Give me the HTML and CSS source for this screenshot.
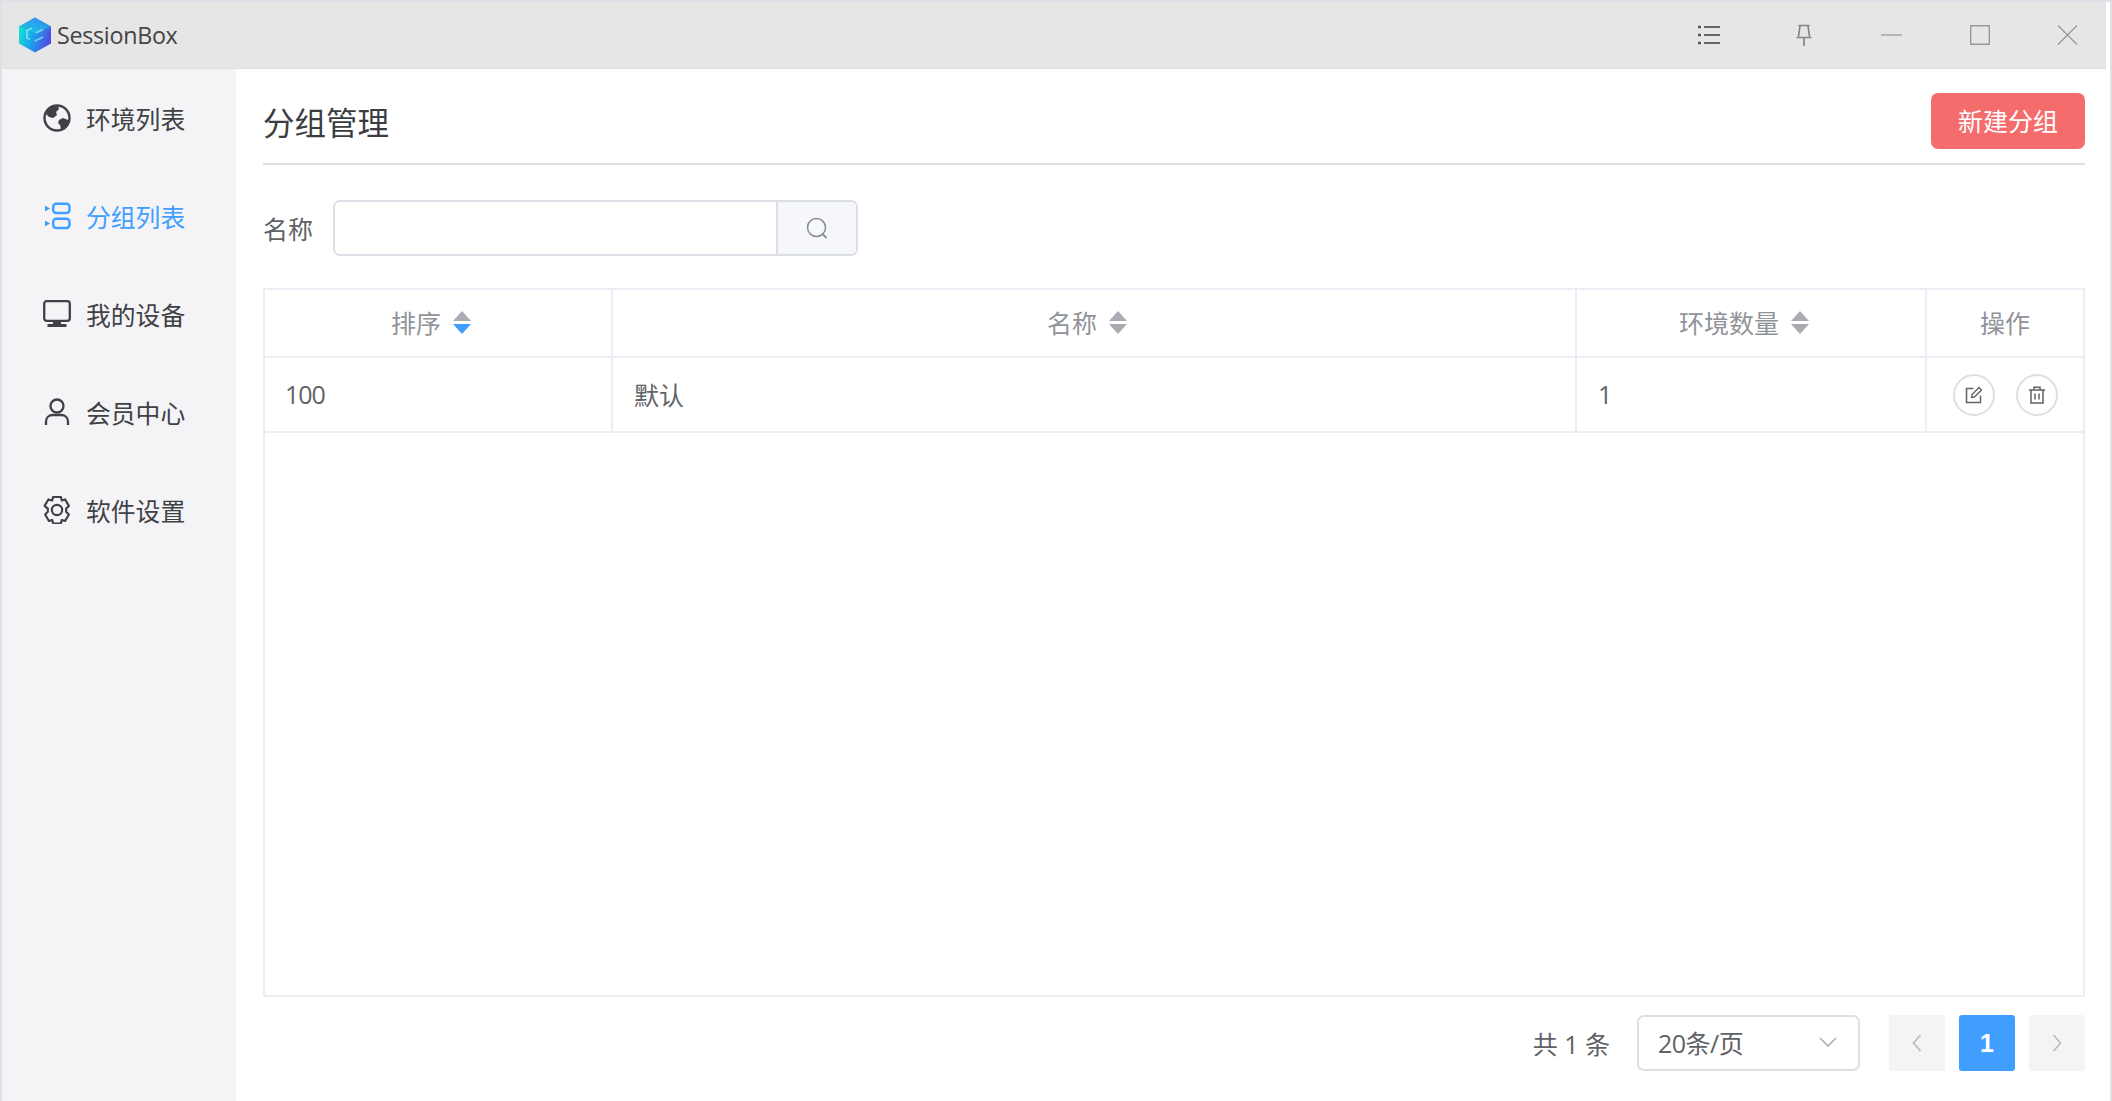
FILE: index.html
```html
<!DOCTYPE html>
<html lang="zh">
<head>
<meta charset="utf-8">
<title>SessionBox</title>
<link rel="stylesheet" href="styles.css">
</head>
<body>
<div class="app">
  <header class="titlebar">
    <div class="brand">
      <svg class="logo" viewBox="0 0 34 36">
        <defs>
          <linearGradient id="lg" x1="0" y1="0.3" x2="1" y2="0.7">
            <stop offset="0" stop-color="#12e6d2"/><stop offset="0.45" stop-color="#1aa6ee"/><stop offset="1" stop-color="#5242de"/>
          </linearGradient>
          <linearGradient id="lg2" x1="0" y1="0" x2="0" y2="1">
            <stop offset="0" stop-color="#3a86f5"/><stop offset="1" stop-color="#18c8e0"/>
          </linearGradient>
        </defs>
        <path d="M17 0.500 33 9.500V26.500L17 35.500 1 26.500V9.500Z" fill="url(#lg)"/>
        <path d="M17 0.500 33 9.500 17 16 1 9.500Z" fill="url(#lg2)" opacity="0.75"/>
        <path d="M14 11 9 13.500V21l3 1.500M17 24l8-4M18 16l7-3.500" fill="none" stroke="#bdf4f6" stroke-width="1.800" opacity="0.6"/>
      </svg>
      <span class="brand-name">SessionBox</span>
    </div>
    <div class="win-tools">
      <svg class="tool tool-list" viewBox="0 0 24 20"><path d="M7 2h16M7 10h16M7 18h16" stroke="#666" stroke-width="1.800" fill="none"/><path d="M1 2h3M1 10h3M1 18h3" stroke="#555" stroke-width="2.600" fill="none"/></svg>
      <svg class="tool tool-pin" viewBox="0 0 16 22"><path d="M2.500 1.500h11M4 1.500l-1.500 11M12 1.500l1.500 11M.5 13.500h15M8 13.500V22" stroke="#858585" stroke-width="1.700" fill="none"/></svg>
      <svg class="tool tool-min" viewBox="0 0 21 20"><path d="M0 10h21" stroke="#a0a0a0" stroke-width="1.400"/></svg>
      <svg class="tool tool-max" viewBox="0 0 20 20"><path d="M.7.700h18.600v18.600H.7z" stroke="#999" stroke-width="1.400" fill="none"/></svg>
      <svg class="tool tool-close" viewBox="0 0 21 20"><path d="M1 .5l19 19M20 .5l-19 19" stroke="#999" stroke-width="1.300" fill="none"/></svg>
    </div>
  </header>
  <div class="body">
    <nav class="sidebar">
      <a class="nav-item">
        <svg class="nav-icon" viewBox="0 0 28 28"><circle cx="14" cy="14" r="12.500" fill="none" stroke="currentColor" stroke-width="2.400"/><path d="M9 3 15 2l1 3-3 3 1 3-4 3-4-1-3-3 2-5zM16 16l4-2 5 2v5l-4 5-3-1-1-4-2-2z" fill="currentColor"/></svg>
        <span>环境列表</span>
      </a>
      <a class="nav-item active">
        <svg class="nav-icon" viewBox="0 0 28 28"><rect x="10.200" y="1.700" width="16.300" height="9.300" rx="3" fill="none" stroke="currentColor" stroke-width="2.400"/><rect x="10.200" y="16.700" width="16.300" height="9.300" rx="3" fill="none" stroke="currentColor" stroke-width="2.400"/><path d="M2 3.500l5 3-5 3zM2 18.500l5 3-5 3z" fill="currentColor"/></svg>
        <span>分组列表</span>
      </a>
      <a class="nav-item">
        <svg class="nav-icon" viewBox="0 0 28 28"><rect x="1.200" y="1.200" width="25.600" height="19.600" rx="2.500" fill="none" stroke="currentColor" stroke-width="2.300"/><path d="M10 21h8v3h-8zM4.500 24h19v3h-19z" fill="currentColor"/></svg>
        <span>我的设备</span>
      </a>
      <a class="nav-item">
        <svg class="nav-icon" viewBox="0 0 28 28"><circle cx="14" cy="8" r="6.500" fill="none" stroke="currentColor" stroke-width="2.300"/><path d="M3 27v-3.500c0-4 3-6.500 7-6.500h8c4 0 7 2.500 7 6.500V27" fill="none" stroke="currentColor" stroke-width="2.300"/></svg>
        <span>会员中心</span>
      </a>
      <a class="nav-item">
        <svg class="nav-icon" viewBox="1 1 26 26"><path d="M10.500 1.800h7l1 3.400 3-1 3.500 6-2.500 2.500v3l2.500 2.500-3.500 6-3-1-1 3.400h-7l-1-3.400-3 1-3.500-6 2.500-2.500v-3L2.500 10.200 6 4.200l3.500 1z" fill="none" stroke="currentColor" stroke-width="2" stroke-linejoin="round"/><circle cx="14" cy="14" r="4.800" fill="none" stroke="currentColor" stroke-width="2"/></svg>
        <span>软件设置</span>
      </a>
    </nav>
    <main class="main">
      <div class="page-head">
        <h1 class="page-title">分组管理</h1>
        <button class="btn-new">新建分组</button>
      </div>
      <div class="filter">
        <label class="filter-label">名称</label>
        <div class="search">
          <div class="search-input"></div>
          <div class="search-btn">
            <svg class="search-icon" viewBox="0 0 22 22"><circle cx="10.500" cy="10.500" r="9" fill="none" stroke="#8a8d93" stroke-width="1.500"/><path d="M16.500 17l4 4" stroke="#8a8d93" stroke-width="1.800"/></svg>
          </div>
        </div>
      </div>
      <div class="table-wrap">
        <table class="table">
          <colgroup><col class="c1"><col class="c2"><col class="c3"><col class="c4"></colgroup>
          <thead>
            <tr>
              <th><span class="th-in">排序<span class="sort"><i class="up"></i><i class="down on"></i></span></span></th>
              <th><span class="th-in">名称<span class="sort"><i class="up"></i><i class="down"></i></span></span></th>
              <th><span class="th-in">环境数量<span class="sort"><i class="up"></i><i class="down"></i></span></span></th>
              <th>操作</th>
            </tr>
          </thead>
          <tbody>
            <tr>
              <td class="num">100</td>
              <td>默认</td>
              <td>1</td>
              <td class="ops">
                <span class="op-row">
                  <span class="op"><svg viewBox="0 0 18 18"><path d="M15.500 9.500V16.500H1.500V2.500H8.500" fill="none" stroke="#606266" stroke-width="1.500"/><path d="M6.500 11.500l.5-3L14 1.500l2.500 2.500-7 7z" fill="none" stroke="#606266" stroke-width="1.400"/></svg></span>
                  <span class="op"><svg viewBox="0 0 18 18"><path d="M1 4h16M6 4V1.200h6V4M3 4v13h12V4M7 7.500v6M11 7.500v6" fill="none" stroke="#606266" stroke-width="1.500"/></svg></span>
                </span>
              </td>
            </tr>
          </tbody>
        </table>
      </div>
      <div class="pager">
        <span class="total">共 1 条</span>
        <div class="size">
          <span>20条/页</span>
          <svg class="chev" viewBox="0 0 18 10"><path d="M1 1l8 8 8-8" fill="none" stroke="#a8abb2" stroke-width="1.500"/></svg>
        </div>
        <div class="pages">
          <span class="pg"><svg class="arrow" viewBox="0 0 10 18"><path d="M8.500 1 1.500 9l7 8" fill="none" stroke="#b4b7bd" stroke-width="1.500"/></svg></span>
          <span class="pg cur">1</span>
          <span class="pg"><svg class="arrow" viewBox="0 0 10 18"><path d="M1.500 1l7 8-7 8" fill="none" stroke="#b4b7bd" stroke-width="1.500"/></svg></span>
        </div>
      </div>
    </main>
  </div>
</div>
</body>
</html>
```
FILE: styles.css
```css
* { box-sizing: border-box; }
html, body { margin: 0; height: 100%; overflow: hidden; background: #fff; }
body { font-family: "Open Sans", "Noto Sans CJK SC", sans-serif; color: #606266; font-size: 25px; }
.app { height: 100vh; display: flex; flex-direction: column; border-top: 2px solid #dfe0e8; border-left: 2px solid #dfe0e8; border-right: 2px solid #dfe0e8; }
.titlebar { height: 67px; flex: none; background: #e6e6e6; display: flex; align-items: center; justify-content: space-between; margin-right: 4px; border-bottom: 1px solid #e0e0e4; }
.brand { display: flex; align-items: center; padding-left: 16px; }
.logo { width: 34px; height: 36px; }
.brand-name { font-size: 23.300px; color: #444; margin-left: 5px; letter-spacing: -0.300px; }
.win-tools { display: flex; align-items: center; }
.tool { display: block; }
.tool-list { width: 24px; height: 20px; margin-right: 75px; }
.tool-pin { width: 16px; height: 22px; margin-right: 69px; }
.tool-min { width: 21px; height: 20px; margin-right: 68px; }
.tool-max { width: 20px; height: 20px; margin-right: 67px; }
.tool-close { width: 21px; height: 20px; margin-right: 28px; }
.body { flex: 1; display: flex; min-height: 0; }
.sidebar { width: 234px; flex: none; background: #f4f4f7; display: flex; flex-direction: column; }
.nav-item { height: 98px; display: flex; align-items: center; padding-left: 41px; color: #3f4144; font-family: "Noto Sans CJK SC", sans-serif; font-size: 24.800px; }
.nav-item.active { color: #409eff; }
.nav-icon { width: 28px; height: 28px; margin-right: 15px; flex: none; }
.main { flex: 1; min-width: 0; display: flex; flex-direction: column; padding: 0 25px 30px 27px; }
.page-head { height: 96px; flex: none; display: flex; align-items: center; justify-content: space-between; border-bottom: 2px solid #dcdfe6; padding-top: 8px; }
.page-title { margin: 2px 0 0; font-family: "Noto Sans CJK SC", sans-serif; font-size: 31.500px; font-weight: 400; color: #3b3d40; }
.btn-new { width: 154px; height: 56px; border: 0; border-radius: 7px; background: #f56c6c; color: #fff; font-family: "Noto Sans CJK SC", sans-serif; font-size: 25px; padding: 0 0 3px; margin-top: 2px; }
.filter { height: 56px; flex: none; margin-top: 35px; display: flex; align-items: center; }
.filter-label { width: 70px; font-family: "Noto Sans CJK SC", sans-serif; }
.search { width: 525px; height: 56px; display: flex; border: 2px solid #dcdfe6; border-radius: 7px; overflow: hidden; }
.search-input { flex: 1; background: #fff; }
.search-btn { width: 80px; background: #f5f7fa; border-left: 2px solid #dcdfe6; display: flex; align-items: center; justify-content: center; }
.search-icon { width: 22px; height: 22px; }
.table-wrap { flex: 1; min-height: 0; margin-top: 32px; border: 2px solid #ebeef5; }
.table { width: 100%; border-collapse: collapse; table-layout: fixed; }
.c1 { width: 347px; } .c2 { width: 964px; } .c3 { width: 350px; }
.table th { height: 67px; padding: 0 0 2px; font-weight: 400; color: #909399; text-align: center; border-right: 2px solid #ebeef5; border-bottom: 2px solid #ebeef5; font-family: "Noto Sans CJK SC", sans-serif; }
.table th:last-child, .table td:last-child { border-right: 0; }
.table td { height: 75px; padding: 0 21px 2px; border-right: 2px solid #ebeef5; border-bottom: 2px solid #ebeef5; font-family: "Open Sans", "Noto Sans CJK SC", sans-serif; color: #606266; }
.table td.num { padding-left: 20px; letter-spacing: -1px; }
.th-in { display: inline-flex; align-items: center; padding-right: 14px; }
.sort { display: inline-flex; flex-direction: column; gap: 3px; margin-left: 12px; }
.sort i { display: block; width: 0; height: 0; border-left: 9px solid transparent; border-right: 9px solid transparent; }
.sort .up { border-bottom: 10px solid #a8abb2; }
.sort .down { border-top: 10px solid #a8abb2; }
.sort .down.on { border-top-color: #409eff; }
.table td.ops { padding: 0 0 0 26px; }
.op-row { display: flex; gap: 21px; }
.op { width: 42px; height: 42px; border: 2px solid #dcdfe6; border-radius: 50%; display: flex; align-items: center; justify-content: center; }
.op svg { width: 18px; height: 18px; }
.pager { flex: none; height: 56px; margin-top: 18px; display: flex; align-items: center; justify-content: flex-end; }
.total { margin-right: 27px; font-family: "Open Sans", "Noto Sans CJK SC", sans-serif; }
.size { width: 223px; height: 56px; border: 2px solid #dcdfe6; border-radius: 7px; display: flex; align-items: center; justify-content: space-between; padding: 0 21px 2px 19px; font-family: "Open Sans", "Noto Sans CJK SC", sans-serif; letter-spacing: -0.500px; }
.chev { width: 18px; height: 10px; }
.pages { display: flex; gap: 14px; margin-left: 29px; }
.pg { width: 56px; height: 56px; background: #f4f4f5; border-radius: 3px; display: flex; align-items: center; justify-content: center; }
.pg.cur { background: #409eff; color: #fff; font-weight: 700; font-family: "Liberation Sans", sans-serif; }
.arrow { width: 10px; height: 18px; }
```
